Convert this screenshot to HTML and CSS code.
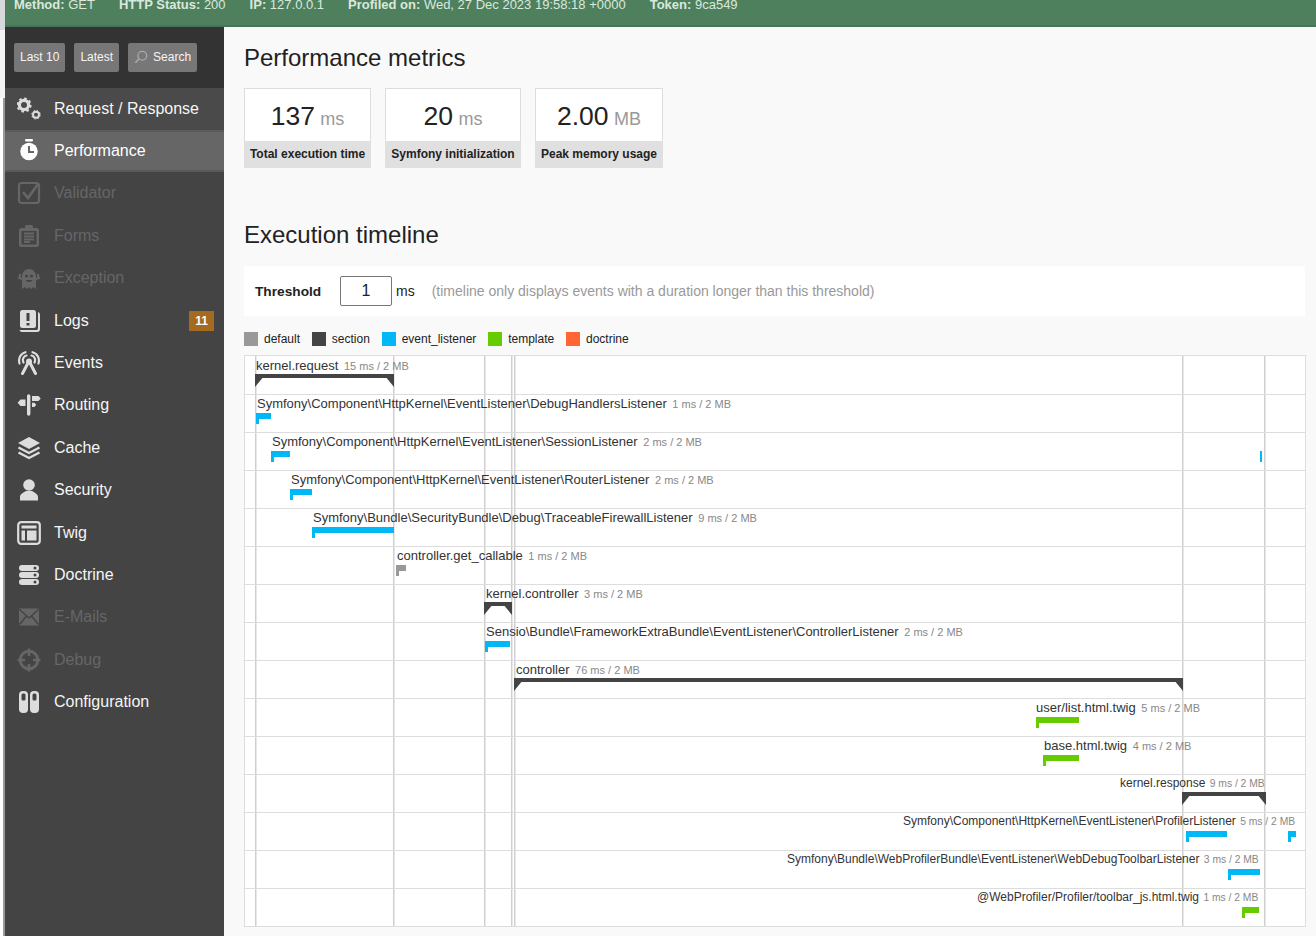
FILE: index.html
```html
<!DOCTYPE html>
<html lang="en">
  <head>
    <meta charset="UTF-8" />
    <title>Symfony Profiler</title>
    <link rel="stylesheet" href="styles.css">
  </head>
  <body>
    <div class="strip">
      <div class="strip-top"></div>
      <div class="strip-mid"></div>
      <div class="strip-low"></div>
    </div>
    <div class="page">
      <div class="summary">
        <span><b>Method:</b> GET</span>
        <span><b>HTTP Status:</b> 200</span>
        <span><b>IP:</b> 127.0.0.1</span>
        <span><b>Profiled on:</b> Wed, 27 Dec 2023 19:58:18 +0000</span>
        <span><b>Token:</b> 9ca549</span>
      </div>
      <div class="content">
        <div class="sidebar">
          <div class="search-bar">
            <a class="btn">Last 10</a>
            <a class="btn">Latest</a>
            <a class="btn">
              <svg class="search-icon" viewBox="0 0 16 16" width="14" height="14"><circle cx="9.5" cy="6.5" r="5" fill="none" stroke="#aaa" stroke-width="1.5"/><path d="M6 10L1.5 14.5" stroke="#aaa" stroke-width="1.8"/></svg>
              Search
            </a>
          </div>
          <ul class="menu">
            <li class="item item-first">
              <svg class="icon" viewBox="0 0 24 24"><circle cx="7" cy="8" r="4.600" fill="none" stroke="currentColor" stroke-width="3.200"/><circle cx="7" cy="8" r="6.700" fill="none" stroke="currentColor" stroke-width="1.800" stroke-dasharray="2.600 2.660"/><circle cx="19" cy="17.700" r="3" fill="none" stroke="currentColor" stroke-width="2"/><circle cx="19" cy="17.700" r="4.300" fill="none" stroke="currentColor" stroke-width="1" stroke-dasharray="1.700 1.680"/></svg>
              Request / Response
            </li>
            <li class="item active">
              <svg class="icon" viewBox="0 0 24 24"><rect x="8" y="0" width="8" height="2.600" rx="1.300" fill="currentColor"/><circle cx="12" cy="12.500" r="8.700" fill="currentColor"/><path d="M12 7V13H17" fill="none" stroke="#666" stroke-width="2"/></svg>
              Performance
            </li>
            <li class="item disabled">
              <svg class="icon" viewBox="0 0 24 24"><rect x="2" y="2" width="20" height="20" rx="2.500" fill="none" stroke="currentColor" stroke-width="2.200"/><path d="M6 11L11 17L21 3" fill="none" stroke="currentColor" stroke-width="2.600"/></svg>
              Validator
            </li>
            <li class="item disabled">
              <svg class="icon" viewBox="0 0 24 24"><path d="M8 4V2.500C8 1.500 9 1 10 1H14C15 1 16 1.500 16 2.500V4H20C21 4 22 5 22 6V21C22 22 21 23 20 23H4C3 23 2 22 2 21V6C2 5 3 4 4 4Z" fill="currentColor"/><rect x="4.500" y="7" width="15" height="13.500" fill="#444"/><path d="M7 9.500H17M7 12.500H17M7 15.500H17M7 18H13" stroke="currentColor" stroke-width="1.800"/></svg>
              Forms
            </li>
            <li class="item disabled">
              <svg class="icon" viewBox="0 0 24 24"><path d="M5 23V11C5 6 8 3 12 3S19 6 19 11V23L16.500 21L14 23L12 21L10 23L7.500 21Z" fill="currentColor"/><path d="M5 13L1 11.500M19 13L23 11.500M3 11V8M21 11V8" stroke="currentColor" stroke-width="2"/><circle cx="9.500" cy="10" r="1.600" fill="#444"/><circle cx="14.500" cy="10" r="1.600" fill="#444"/><path d="M8.500 14C10 16.500 14 16.500 15.500 14Z" fill="#444"/></svg>
              Exception
            </li>
            <li class="item">
              <svg class="icon" viewBox="0 0 24 24"><path d="M21 3C22.500 3.500 23 4.500 23 6V20C23 22 22 23 20 23H6C4 23 3 22.500 2.500 21H19C20.500 21 21 20.500 21 19Z" fill="currentColor"/><rect x="3" y="1" width="16" height="18" rx="2.500" fill="currentColor"/><path d="M11 4V12M11 14V16.500" stroke="#444" stroke-width="3"/></svg>
              Logs
              <span class="badge">11</span>
            </li>
            <li class="item">
              <svg class="icon" viewBox="0 0 24 24"><circle cx="12" cy="10.500" r="3" fill="currentColor"/><path d="M11 12L5.500 22.500M13 12L18.500 22.500" stroke="currentColor" stroke-width="3" stroke-linecap="round"/><path d="M6.500 11.500C5 8.500 6.500 5 9.500 4.500M17.500 11.500C19 8.500 17.500 5 14.500 4.500M2.500 12.500C1 7.500 3.500 2.500 8.500 1.200M21.500 12.500C23 7.500 20.500 2.500 15.500 1.200" fill="none" stroke="currentColor" stroke-width="2.200" stroke-linecap="round"/></svg>
              Events
            </li>
            <li class="item">
              <svg class="icon" viewBox="0 0 24 24"><rect x="10" y="1.300" width="3.400" height="21.400" rx="1.700" fill="currentColor"/><path d="M8.500 6.500V13H3.500L0.600 9.700L3.500 6.500ZM15 3H21.500L23.700 5.500L21.500 8H15ZM15 9.700H17.500L19.200 11.800L17.500 14H15Z" fill="currentColor"/></svg>
              Routing
            </li>
            <li class="item">
              <svg class="icon" viewBox="0 0 24 24"><path d="M12 1L23 7L12 13L1 7Z" fill="currentColor"/><path d="M1.500 11.500L12 17L22.500 11.500M1.500 16.500L12 22L22.500 16.500" fill="none" stroke="currentColor" stroke-width="2.400"/></svg>
              Cache
            </li>
            <li class="item">
              <svg class="icon" viewBox="0 0 24 24"><circle cx="12" cy="7" r="5.800" fill="currentColor"/><path d="M3 22.500V19C3 16 6.500 14.500 9 13H15C17.500 14.500 21 16 21 19V22.500Z" fill="currentColor"/></svg>
              Security
            </li>
            <li class="item">
              <svg class="icon" viewBox="0 0 24 24"><rect x="1.200" y="1.200" width="21.600" height="21.600" rx="3" fill="none" stroke="currentColor" stroke-width="2.200"/><path d="M4.500 4.500H19.500V7.500H4.500ZM4.500 9.500H8V19.500H4.500ZM10 9.500H19.500V19.500H10Z" fill="currentColor"/></svg>
              Twig
            </li>
            <li class="item">
              <svg class="icon" viewBox="0 0 24 24"><rect x="2" y="2" width="20" height="6" rx="3" fill="currentColor"/><rect x="2" y="9" width="20" height="6" rx="3" fill="currentColor"/><rect x="2" y="16" width="20" height="6" rx="3" fill="currentColor"/><circle cx="18" cy="5" r="1.500" fill="#444"/><circle cx="18" cy="12" r="1.500" fill="#444"/><circle cx="18" cy="19" r="1.500" fill="#444"/></svg>
              Doctrine
            </li>
            <li class="item disabled">
              <svg class="icon" viewBox="0 0 24 24"><rect x="2" y="3.500" width="20" height="17" rx="1" fill="currentColor"/><path d="M2.500 4.500L12 13L21.500 4.500M2.500 19.500L9.500 11M21.500 19.500L14.500 11" fill="none" stroke="#444" stroke-width="1.500"/></svg>
              E-Mails
            </li>
            <li class="item disabled">
              <svg class="icon" viewBox="0 0 24 24"><circle cx="12" cy="12" r="8.800" fill="none" stroke="currentColor" stroke-width="3"/><path d="M12 0.500V8M12 16V23.500M0.500 12H8M16 12H23.500" stroke="currentColor" stroke-width="2.600"/></svg>
              Debug
            </li>
            <li class="item">
              <svg class="icon" viewBox="0 0 24 24"><rect x="2" y="1" width="9" height="22" rx="4" fill="currentColor"/><rect x="13" y="1" width="9" height="22" rx="4" fill="currentColor"/><rect x="4.500" y="3.500" width="4" height="7" rx="1.500" fill="#444"/><rect x="15.500" y="3.500" width="4" height="7" rx="1.500" fill="#444"/></svg>
              Configuration
            </li>
          </ul>
        </div>
        <div class="main">
          <h2 class="title-first">Performance metrics</h2>
          <div class="metrics">
            <div class="metric m1">
              <div class="value">137 <small>ms</small></div>
              <div class="label">Total execution time</div>
            </div>
            <div class="metric m2">
              <div class="value">20 <small>ms</small></div>
              <div class="label">Symfony initialization</div>
            </div>
            <div class="metric m3">
              <div class="value">2.00 <small>MB</small></div>
              <div class="label">Peak memory usage</div>
            </div>
          </div>
          <h2 class="title-second">Execution timeline</h2>
          <div class="threshold">
            <label>Threshold</label>
            <input type="text" value="1" />
            <span class="unit">ms</span>
            <span class="help">(timeline only displays events with a duration longer than this threshold)</span>
          </div>
          <div class="legend">
            <span><i class="c-default"></i>default</span>
            <span><i class="c-section"></i>section</span>
            <span><i class="c-listener"></i>event_listener</span>
            <span><i class="c-template"></i>template</span>
            <span><i class="c-doctrine"></i>doctrine</span>
          </div>
          <div class="timeline">
            <!-- period lines, x from the left edge of the timeline -->
            <div class="vline" style="left:10px"></div>
            <div class="vline" style="left:148px"></div>
            <div class="vline" style="left:239px"></div>
            <div class="vline" style="left:266px"></div>
            <div class="vline" style="left:269px"></div>
            <div class="vline" style="left:937px"></div>
            <div class="vline" style="left:1019px"></div>

            <div class="row row-first">
              <div class="event" style="left:11px">kernel.request <small>15 ms / 2 MB</small></div>
              <div class="bar section" style="left:10px;width:139px"></div>
            </div>
            <div class="row">
              <div class="event" style="left:12px">Symfony\Component\HttpKernel\EventListener\DebugHandlersListener <small>1 ms / 2 MB</small></div>
              <div class="bar listener" style="left:11px;width:15px"></div>
            </div>
            <div class="row">
              <div class="event" style="left:27px">Symfony\Component\HttpKernel\EventListener\SessionListener <small>2 ms / 2 MB</small></div>
              <div class="bar listener" style="left:26px;width:19px"></div>
              <div class="bar listener tiny" style="left:1015px;width:2px"></div>
            </div>
            <div class="row">
              <div class="event" style="left:46px">Symfony\Component\HttpKernel\EventListener\RouterListener <small>2 ms / 2 MB</small></div>
              <div class="bar listener" style="left:45px;width:22px"></div>
            </div>
            <div class="row">
              <div class="event" style="left:68px">Symfony\Bundle\SecurityBundle\Debug\TraceableFirewallListener <small>9 ms / 2 MB</small></div>
              <div class="bar listener" style="left:67px;width:82px"></div>
            </div>
            <div class="row">
              <div class="event" style="left:152px">controller.get_callable <small>1 ms / 2 MB</small></div>
              <div class="bar default" style="left:151px;width:10px"></div>
            </div>
            <div class="row">
              <div class="event" style="left:241px">kernel.controller <small>3 ms / 2 MB</small></div>
              <div class="bar section" style="left:239px;width:28px"></div>
            </div>
            <div class="row">
              <div class="event" style="left:241px">Sensio\Bundle\FrameworkExtraBundle\EventListener\ControllerListener <small>2 ms / 2 MB</small></div>
              <div class="bar listener" style="left:240px;width:25px"></div>
            </div>
            <div class="row">
              <div class="event" style="left:271px">controller <small>76 ms / 2 MB</small></div>
              <div class="bar section" style="left:269px;width:669px"></div>
            </div>
            <div class="row">
              <div class="event" style="left:791px">user/list.html.twig <small>5 ms / 2 MB</small></div>
              <div class="bar template" style="left:791px;width:43px"></div>
            </div>
            <div class="row">
              <div class="event" style="left:799px">base.html.twig <small>4 ms / 2 MB</small></div>
              <div class="bar template" style="left:798px;width:36px"></div>
            </div>
            <div class="row">
              <div class="event narrow" style="left:875px">kernel.response <small>9 ms / 2 MB</small></div>
              <div class="bar section" style="left:937px;width:84px"></div>
            </div>
            <div class="row">
              <div class="event narrow" style="left:658px">Symfony\Component\HttpKernel\EventListener\ProfilerListener <small>5 ms / 2 MB</small></div>
              <div class="bar listener" style="left:941px;width:41px"></div>
              <div class="bar listener" style="left:1043px;width:8px"></div>
            </div>
            <div class="row">
              <div class="event narrow" style="left:542px">Symfony\Bundle\WebProfilerBundle\EventListener\WebDebugToolbarListener <small>3 ms / 2 MB</small></div>
              <div class="bar listener" style="left:983px;width:32px"></div>
            </div>
            <div class="row">
              <div class="event narrow" style="left:732px">@WebProfiler/Profiler/toolbar_js.html.twig <small>1 ms / 2 MB</small></div>
              <div class="bar template" style="left:997px;width:17px"></div>
            </div>
          </div>
        </div>
      </div>
    </div>
  </body>
</html>
```

FILE: styles.css
```css
* {
  box-sizing: border-box;
}
html, body {
  height: 100%;
  margin: 0;
  overflow: hidden;
}
body {
  display: flex;
  background: #f9f9f9;
  color: #222;
  font-family: "Liberation Sans", Arial, sans-serif;
}

/* window edge on the far left */
.strip {
  width: 5px;
  display: flex;
  flex-direction: column;
  flex-shrink: 0;
}
.strip-top {
  height: 30px;
  background: #d6dadd;
}
.strip-mid {
  height: 68px;
  background: #f3f3f3;
}
.strip-low {
  flex: 1;
  background: #fff;
  border-right: 2px solid #999;
}

.page {
  flex: 1;
  display: flex;
  flex-direction: column;
  min-width: 0;
}

/* green summary bar, scrolled partly off the top */
.summary {
  height: 27px;
  padding: 0 9px;
  display: flex;
  gap: 24px;
  align-items: flex-start;
  overflow: hidden;
  background: #4f805d;
  border-bottom: 2px solid #47735a;
  color: #d9e8dd;
  font-size: 13px;
  line-height: 10px;
  white-space: nowrap;
}

.content {
  flex: 1;
  display: flex;
  min-height: 0;
}

.sidebar {
  width: 219px;
  flex-shrink: 0;
  background: #444;
}
.search-bar {
  height: 60.5px;
  padding: 16px 9px 0;
  display: flex;
  gap: 9px;
  background: #333;
}
.btn {
  height: 29px;
  padding: 0 6px 1px;
  display: flex;
  align-items: center;
  gap: 5px;
  background: #777;
  border-radius: 2px;
  color: #f5f5f5;
  font-size: 12px;
}

.menu {
  list-style: none;
  margin: 0;
  padding: 0;
}
.item {
  height: 42.4px;
  padding-left: 12px;
  display: flex;
  align-items: center;
  gap: 13px;
  color: #f5f5f5;
  font-size: 16px;
}
.item .icon {
  width: 24px;
  height: 24px;
  color: #ddd;
  flex-shrink: 0;
}
.item-first {
  background: #4a4a4a;
}
.active {
  background: #666;
  border-top: 2px solid #5a5a5a;
  border-bottom: 2px solid #5a5a5a;
  color: #fff;
}
.active .icon {
  color: #fff;
}
.disabled {
  color: #666;
}
.disabled .icon {
  color: #666;
}
.badge {
  margin-left: auto;
  margin-right: 10px;
  width: 25px;
  height: 20px;
  background: #a46a1f;
  color: #fff;
  font-size: 12px;
  font-weight: bold;
  line-height: 20px;
  text-align: center;
}

.main {
  flex: 1;
  min-width: 0;
  padding: 0 11px 0 20px;
}
h2 {
  margin: 0;
  font-size: 24px;
  font-weight: normal;
  line-height: 30px;
}
.title-first {
  margin-top: 16px;
}
.title-second {
  margin-top: 52px;
}

.metrics {
  margin-top: 15px;
  display: flex;
  gap: 14px;
}
.metric {
  display: flex;
  flex-direction: column;
  height: 80px;
}
.m1 { width: 127px; }
.m2 { width: 136px; }
.m3 { width: 128px; }
.value {
  height: 53px;
  padding-top: 5px;
  background: #fff;
  border: 1px solid #ddd;
  border-bottom: 0;
  font-size: 26.5px;
  line-height: 44px;
  text-align: center;
  word-spacing: -2px;
}
.value small {
  color: #999;
  font-size: 18px;
}
.label {
  flex: 1;
  background: #e0e0e0;
  font-size: 12px;
  font-weight: bold;
  line-height: 27px;
  text-align: center;
  white-space: nowrap;
}

.threshold {
  margin-top: 16px;
  height: 50px;
  padding-left: 11px;
  display: flex;
  align-items: center;
  background: #fff;
  font-size: 14px;
}
.threshold label {
  width: 85px;
  font-size: 13.7px;
  font-weight: bold;
}
.threshold input {
  width: 52px;
  height: 30px;
  border: 1px solid #777;
  border-radius: 2px;
  background: #fff;
  color: #222;
  font-family: inherit;
  font-size: 16px;
  text-align: center;
}
.unit {
  margin-left: 4px;
}
.help {
  margin-left: 17px;
  color: #999;
}

.legend {
  margin-top: 15px;
  height: 16px;
  display: flex;
  gap: 11.8px;
  font-size: 12px;
  line-height: 16px;
}
.legend span {
  display: flex;
  align-items: center;
  gap: 6px;
}
.legend i {
  width: 14px;
  height: 14px;
}
.c-default { background: #999; }
.c-section { background: #444; }
.c-listener { background: #00b8f5; }
.c-template { background: #66cc00; }
.c-doctrine { background: #ff6633; }

/* timeline canvas: events sit at their time offset */
.timeline {
  position: relative;
  margin-top: 8px;
  width: 1062px;
  height: 572px;
  background: #fff;
  border: 1px solid #ddd;
  border-bottom: 0;
}
.vline {
  position: absolute;
  top: 0;
  bottom: 0;
  width: 2px;
  border-left: 1px solid #cfcfcf;
  border-right: 1px solid #e8e8e8;
}
.row {
  position: relative;
  height: 38px;
  border-bottom: 1px solid #ddd;
}
.row-first {
  height: 39px;
}
.event {
  position: absolute;
  top: 1px;
  font-size: 13px;
  line-height: 15px;
  color: #333;
  white-space: nowrap;
}
.row-first .event {
  top: 2px;
}
.event small {
  margin-left: 2px;
  color: #888;
  font-size: 11px;
}
/* labels near the right edge get squeezed */
.narrow {
  font-size: 12px;
}
.narrow small {
  margin-left: 1px;
  font-size: 10.3px;
}
.bar {
  position: absolute;
  top: 18px;
  height: 6px;
}
.bar::before {
  content: "";
  position: absolute;
  top: 0;
  left: 0;
  width: 3px;
  height: 11px;
  background: inherit;
}
.listener { background: #00b8f5; }
.template { background: #66cc00; }
.default { background: #999; }
.tiny {
  height: 11px;
}
.tiny::before {
  display: none;
}
.section {
  top: 17px;
  height: 4px;
  background: #444;
}
.row-first .section {
  top: 18px;
}
.section::before,
.section::after {
  content: "";
  position: absolute;
  top: 0;
  width: 8px;
  height: 13px;
  background: #444;
}
.section::before {
  left: 0;
  clip-path: polygon(0 0, 100% 0, 100% 25%, 0 100%);
}
.section::after {
  left: auto;
  right: 0;
  clip-path: polygon(0 0, 100% 0, 100% 100%, 0 25%);
}
```
